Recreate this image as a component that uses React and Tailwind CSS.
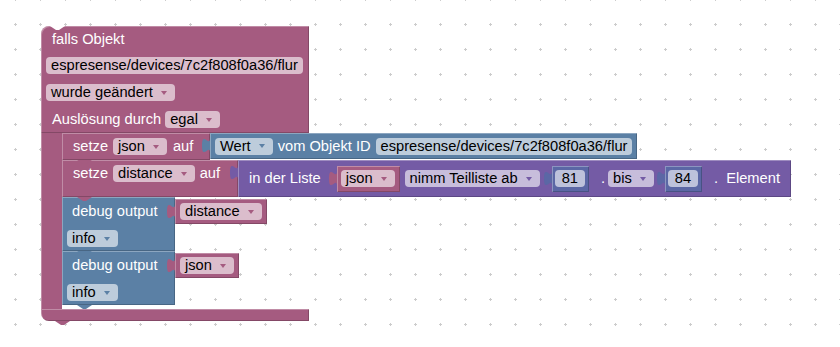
const PINK = "#a55b80";
const BLUE = "#5b80a5";
const PURPLE = "#745ba5";

const SHADE = "shadow-[inset_1px_1px_0_rgba(255,255,255,0.3),inset_-1px_-1px_0_rgba(0,0,0,0.2)]";

const Pill = ({ children, bg, arrow, className = "" }) => (
    <div className={`${bg} h-[17px] rounded-[4px] flex items-center pl-[5px] ${arrow ? "pr-[8px]" : "pr-[5px]"} text-black leading-none whitespace-nowrap shrink-0 ${className}`}>
        <span>{children}</span>
        {arrow && (
            <svg className="ml-[8px]" width="6" height="4" viewBox="0 0 6 4">
                <path d="M0,0 L6,0 L3,4 Z" fill={arrow} />
            </svg>
        )}
    </div>
);

// puzzle tab of a value block, sticks out on the left
const OutTab = ({ fill }) => (
    <svg className="absolute left-[-8px] top-[5px]" width="8" height="15" viewBox="0 0 8 15">
        <path d="M8,0 c0,10 -8,-8 -8,7.5 s8,-2.5 8,7.5 Z" fill={fill} />
    </svg>
);

// tab under a statement block
const NextTab = ({ fill, left = "left-[15px]" }) => (
    <svg className={`absolute ${left} bottom-[-4px] z-10`} width="15" height="4" viewBox="0 0 15 4">
        <path d="M0,0 l6,4 3,0 6,-4 Z" fill={fill} />
    </svg>
);

const Label = ({ children, className = "" }) => (
    <span className={`text-white whitespace-nowrap leading-none shrink-0 ${className}`}>{children}</span>
);

const NumberBlock = ({ value, className = "" }) => (
    <div className={`relative h-[26px] bg-[#5b67a5] flex items-center pl-[3px] pr-[4px] shrink-0 ${SHADE} ${className}`}>
        <OutTab fill="#5b67a5" />
        <div className="h-[17px] rounded-[4px] bg-[#bdc2db] flex items-center px-[7px] leading-none text-black">{value}</div>
    </div>
);

const SetzeJson = () => (
    <div className="flex items-start">
        <div className={`relative w-[148px] h-[27px] bg-[#a55b80] flex items-center pl-[11px] shrink-0 ${SHADE}`}>
            <Label>setze</Label>
            <Pill bg="bg-[#dbbdcc]" arrow={PINK} className="ml-[5px]">json</Pill>
            <Label className="ml-[6px]">auf</Label>
            <NextTab fill={PINK} />
        </div>
        <div className={`relative h-[26px] bg-[#5b80a5] flex items-center px-[5px] shrink-0 ${SHADE}`}>
            <OutTab fill={BLUE} />
            <Pill bg="bg-[#bdccdb]" arrow={BLUE}>Wert</Pill>
            <Label className="ml-[5px]">vom Objekt ID</Label>
            <Pill bg="bg-[#bdccdb]" className="ml-[5px]">espresense/devices/7c2f808f0a36/flur</Pill>
        </div>
    </div>
);

const SetzeDistance = () => (
    <div className="flex items-start">
        <div className={`relative w-[176px] h-[37px] bg-[#a55b80] flex items-start pt-[5px] pl-[11px] shrink-0 ${SHADE}`}>
            <div className="h-[17px] flex items-center"><Label>setze</Label></div>
            <Pill bg="bg-[#dbbdcc]" arrow={PINK} className="ml-[5px]">distance</Pill>
            <div className="h-[17px] flex items-center ml-[5px]"><Label>auf</Label></div>
            <NextTab fill={PINK} />
        </div>
        <div className={`relative h-[37px] bg-[#745ba5] flex items-center pl-[11px] pr-[11px] shrink-0 ${SHADE}`}>
            <OutTab fill={PURPLE} />
            <Label>in der Liste</Label>
            <div className={`relative ml-[16px] h-[26px] bg-[#a55b80] flex items-center pl-[4px] pr-[5px] shrink-0 ${SHADE}`}>
                <OutTab fill={PINK} />
                <Pill bg="bg-[#dbbdcc]" arrow={PINK}>json</Pill>
            </div>
            <Pill bg="bg-[#c7bddb]" arrow={PURPLE} className="ml-[5px]">nimm Teilliste ab</Pill>
            <NumberBlock value="81" className="ml-[12px]" />
            <Label className="ml-[12px]">.</Label>
            <Pill bg="bg-[#c7bddb]" arrow={PURPLE} className="ml-[3px]">bis</Pill>
            <NumberBlock value="84" className="ml-[11px]" />
            <Label className="ml-[12px]">.</Label>
            <Label className="ml-[8px]">Element</Label>
        </div>
    </div>
);

const DebugOutput = ({ variable, last }) => (
    <div className="flex items-start">
        <div className={`relative w-[113px] h-[54px] bg-[#5b80a5] flex flex-col shrink-0 ${SHADE}`}>
            <div className="h-[29px] flex items-center pl-[10px]"><Label>debug output</Label></div>
            <Pill bg="bg-[#bdccdb]" arrow={BLUE} className="ml-[5px] mt-[4px] self-start">info</Pill>
            <NextTab fill={BLUE} />
        </div>
        <div className={`relative mt-[2px] h-[25px] bg-[#a55b80] flex items-center px-[5px] shrink-0 ${SHADE}`}>
            <OutTab fill={PINK} />
            <Pill bg="bg-[#dbbdcc]" arrow={PINK}>{variable}</Pill>
        </div>
    </div>
);

export default function App() {
    return (
        <div className="relative w-[840px] h-[347px] bg-white overflow-hidden font-['Liberation_Sans',Arial,sans-serif] text-[14.67px]">
            <svg className="absolute inset-0" width="840" height="347">
                <defs>
                    <pattern id="grid" x="14" y="23" width="25" height="25" patternUnits="userSpaceOnUse">
                        <rect x="0" y="1" width="3" height="1" fill="#cccccc" />
                        <rect x="1" y="0" width="1" height="3" fill="#cccccc" />
                    </pattern>
                </defs>
                <rect width="840" height="347" fill="url(#grid)" />
            </svg>

            <div className="absolute left-[41px] top-[26px] w-[268px]">
                {/* falls Objekt header */}
                <div className={`relative h-[107px] bg-[#a55b80] rounded-tl-[8px] flex flex-col px-[5px] ${SHADE}`}>
                    <svg className="absolute left-[9px] top-0" width="15" height="4" viewBox="0 0 15 4">
                        <path d="M0,0 l6,4 3,0 6,-4 Z" fill="#ffffff" />
                    </svg>
                    <div className="h-[26px] flex items-center pl-[6px]"><Label>falls Objekt</Label></div>
                    <Pill bg="bg-[#dbbdcc]" className="mt-[5px] self-start">espresense/devices/7c2f808f0a36/flur</Pill>
                    <Pill bg="bg-[#dbbdcc]" arrow={PINK} className="mt-[10px] self-start">wurde geändert</Pill>
                    <div className="mt-[10px] h-[17px] flex items-center">
                        <Label className="pl-[6px]">Auslösung durch</Label>
                        <Pill bg="bg-[#dbbdcc]" arrow={PINK} className="ml-[4px]">egal</Pill>
                    </div>
                </div>

                <div className="flex">
                    <div className="w-[21px] shrink-0 bg-[#a55b80] shadow-[inset_1px_0_0_rgba(255,255,255,0.3)]" />
                    <div className="flex flex-col pb-[4px]">
                        <SetzeJson />
                        <SetzeDistance />
                        <DebugOutput variable="distance" />
                        <DebugOutput variable="json" last />
                    </div>
                </div>

                <div className={`relative h-[12px] w-[268px] bg-[#a55b80] rounded-bl-[8px] ${SHADE}`}>
                    <NextTab fill={PINK} left="left-[14px]" />
                </div>
            </div>
        </div>
    );
}
